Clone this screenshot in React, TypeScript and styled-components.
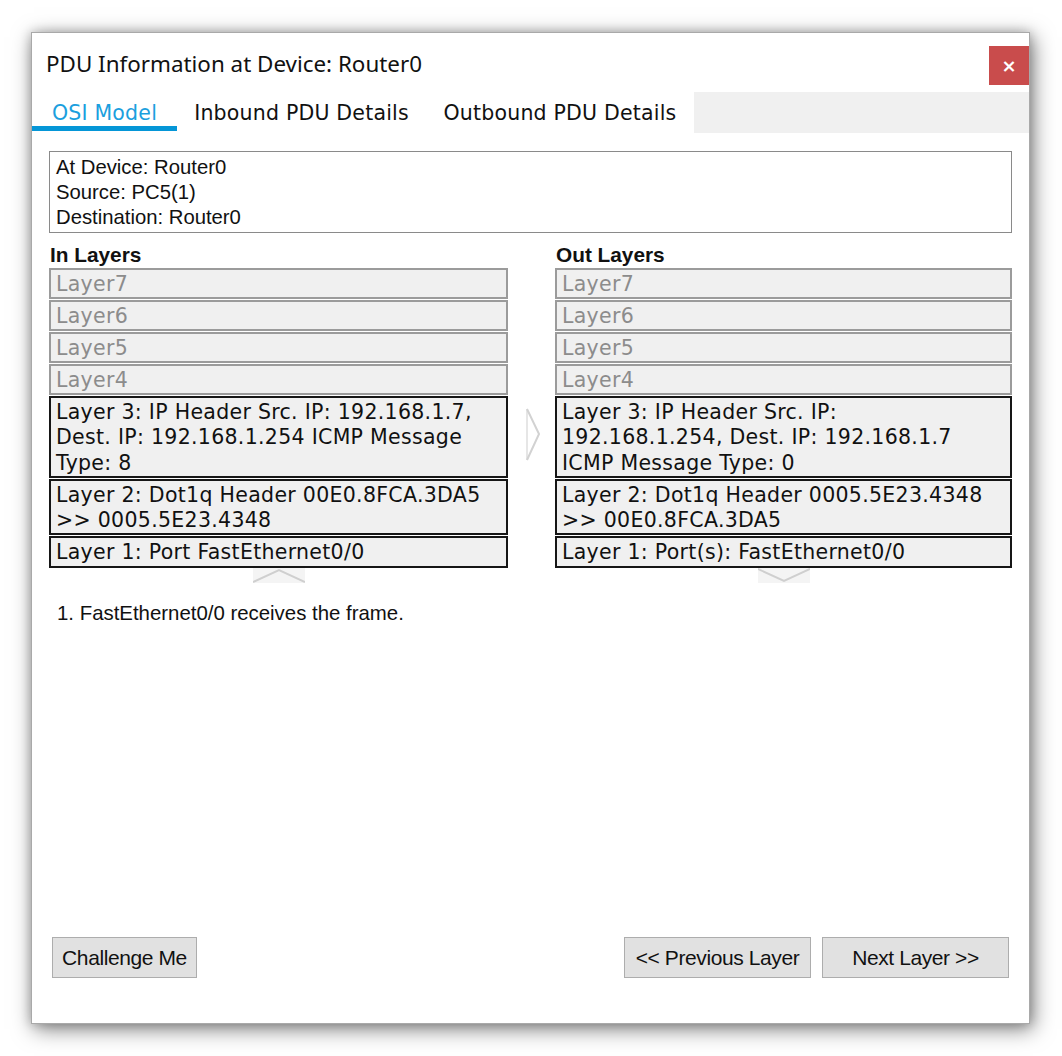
import styled, { createGlobalStyle } from 'styled-components';

const Global = createGlobalStyle`
  html, body { margin: 0; padding: 0; background: #ffffff; }
  body { font-family: "Liberation Sans", Arial, sans-serif; }
  * { box-sizing: border-box; }
`;

const Page = styled.div`
  width: 1062px;
  height: 1056px;
  padding: 32px 0 0 31px;
  background: #ffffff;
`;

const Window = styled.div`
  width: 999px;
  height: 992px;
  border: 1px solid #a9a9a9;
  background: #ffffff;
  box-shadow: 3px 5px 20px rgba(0, 0, 0, 0.5), 0 0 10px rgba(0, 0, 0, 0.2);
  display: flex;
  flex-direction: column;
`;

const Header = styled.div`
  height: 59px;
  display: flex;
  align-items: flex-start;
  justify-content: space-between;
  padding-left: 14px;
`;

const Title = styled.div`
  margin-top: 16px;
  font-family: "Noto Sans", "Open Sans", sans-serif;
  font-size: 22.4px;
  line-height: 30px;
  color: #111;
`;

const CloseButton = styled.button`
  margin-top: 13px;
  width: 40px;
  height: 39px;
  border: none;
  background: #c94c4c;
  color: #fff;
  font-family: "DejaVu Sans", sans-serif;
  font-size: 18px;
  font-weight: bold;
  display: flex;
  align-items: center;
  justify-content: center;
  padding: 0;
`;

const TabBar = styled.div`
  height: 41px;
  display: flex;
  align-items: stretch;
`;

const Tab = styled.div<{ $active?: boolean; $width: number }>`
  width: ${({ $width }) => $width}px;
  display: flex;
  justify-content: center;
  padding-top: 9px;
  font-family: "DejaVu Sans", Verdana, sans-serif;
  font-size: 20.5px;
  letter-spacing: 0.2px;
  line-height: 25px;
  white-space: nowrap;
  color: ${({ $active }) => ($active ? '#1b9fde' : '#111')};
  border-bottom: 5px solid ${({ $active }) => ($active ? '#0596d7' : 'transparent')};
  margin-bottom: 2px;
`;

const TabFiller = styled.div`
  flex: 1;
  background: #f0f0f0;
`;

const Body = styled.div`
  flex: 1;
  padding: 18px 17px 0 17px;
  display: flex;
  flex-direction: column;
`;

const InfoBox = styled.div`
  height: 82px;
  border: 1px solid #8a8a8a;
  padding: 3px 6px;
  font-size: 20.3px;
  line-height: 25px;
  color: #111;
`;

const Columns = styled.div`
  display: grid;
  grid-template-columns: 459px 47px 457px;
  margin-top: 9px;
`;

const Column = styled.div`
  display: flex;
  flex-direction: column;
`;

const ColumnTitle = styled.div`
  font-size: 20.8px;
  font-weight: bold;
  line-height: 26px;
  color: #111;
  padding-left: 1px;
`;

const LayerList = styled.div`
  display: flex;
  flex-direction: column;
  gap: 1px;
`;

const LayerRow = styled.div<{ $active?: boolean }>`
  border: 2px solid ${({ $active }) => ($active ? '#161616' : '#9b9b9b')};
  background: #f0f0f0;
  padding: ${({ $active }) => ($active ? '2px 5px 0' : '1px 5px 0')};
  font-family: "DejaVu Sans", Verdana, sans-serif;
  font-size: 20.5px;
  letter-spacing: 0.3px;
  line-height: ${({ $active }) => ($active ? '25.3px' : '26px')};
  color: ${({ $active }) => ($active ? '#111' : '#8c8c8c')};
  white-space: pre;
  overflow: hidden;
`;

const ArrowCol = styled.div`
  display: flex;
  justify-content: center;
  padding-top: 166px;
`;

const ScrollTab = styled.div`
  align-self: center;
  width: 52px;
  height: 15px;
  background: #f4f4f4;
  display: flex;
  align-items: stretch;
`;

const Steps = styled.div`
  margin-top: 18px;
  padding-left: 8px;
  font-size: 20.4px;
  line-height: 25px;
  color: #111;
`;

const Footer = styled.div`
  display: flex;
  align-items: center;
  padding: 0 20px 0 20px;
  margin-bottom: 45px;
  gap: 11px;
`;

const Spacer = styled.div`
  flex: 1;
`;

const Button = styled.button<{ $width: number }>`
  width: ${({ $width }) => $width}px;
  height: 41px;
  background: #e1e1e1;
  border: 1px solid #adadad;
  font-family: "Liberation Sans", Arial, sans-serif;
  font-size: 21px;
  color: #111;
  padding: 0;
  letter-spacing: -0.4px;
`;

const inLayers = [
  'Layer 3: IP Header Src. IP: 192.168.1.7,\nDest. IP: 192.168.1.254 ICMP Message\nType: 8',
  'Layer 2: Dot1q Header 00E0.8FCA.3DA5\n>> 0005.5E23.4348',
  'Layer 1: Port FastEthernet0/0',
];

const outLayers = [
  'Layer 3: IP Header Src. IP:\n192.168.1.254, Dest. IP: 192.168.1.7\nICMP Message Type: 0',
  'Layer 2: Dot1q Header 0005.5E23.4348\n>> 00E0.8FCA.3DA5',
  'Layer 1: Port(s): FastEthernet0/0',
];

const greyLayers = ['Layer7', 'Layer6', 'Layer5', 'Layer4'];

function Chevron({ up }: { up: boolean }) {
  return (
    <svg width="52" height="15" viewBox="0 0 52 15">
      <polyline
        points={up ? '0,14 26,2 52,14' : '0,1 26,13 52,1'}
        fill="none"
        stroke="#cfcfcf"
        strokeWidth="2"
      />
    </svg>
  );
}

function LayerColumn({ title, layers, up }: { title: string; layers: string[]; up: boolean }) {
  return (
    <Column>
      <ColumnTitle>{title}</ColumnTitle>
      <LayerList>
        {greyLayers.map((l) => (
          <LayerRow key={l}>{l}</LayerRow>
        ))}
        {layers.map((l) => (
          <LayerRow key={l} $active>
            {l}
          </LayerRow>
        ))}
      </LayerList>
      <ScrollTab>
        <Chevron up={up} />
      </ScrollTab>
    </Column>
  );
}

export default function App() {
  return (
    <>
      <Global />
      <Page>
        <Window>
          <Header>
            <Title>PDU Information at Device: Router0</Title>
            <CloseButton type="button">×</CloseButton>
          </Header>
          <TabBar>
            <Tab $active $width={145}>OSI Model</Tab>
            <Tab $width={249}>Inbound PDU Details</Tab>
            <Tab $width={268}>Outbound PDU Details</Tab>
            <TabFiller />
          </TabBar>
          <Body>
            <InfoBox>
              At Device: Router0
              <br />
              Source: PC5(1)
              <br />
              Destination: Router0
            </InfoBox>
            <Columns>
              <LayerColumn title="In Layers" layers={inLayers} up />
              <ArrowCol>
                <svg width="16" height="53" viewBox="0 0 16 53">
                  <line x1="3" y1="1" x2="3" y2="52" stroke="#e6e6e6" strokeWidth="2" />
                  <polyline points="3,1 15,26 3,52" fill="none" stroke="#d2d2d2" strokeWidth="2" />
                </svg>
              </ArrowCol>
              <LayerColumn title="Out Layers" layers={outLayers} up={false} />
            </Columns>
            <Steps>1. FastEthernet0/0 receives the frame.</Steps>
          </Body>
          <Footer>
            <Button type="button" $width={145}>Challenge Me</Button>
            <Spacer />
            <Button type="button" $width={187}>&lt;&lt; Previous Layer</Button>
            <Button type="button" $width={187}>Next Layer &gt;&gt;</Button>
          </Footer>
        </Window>
      </Page>
    </>
  );
}
